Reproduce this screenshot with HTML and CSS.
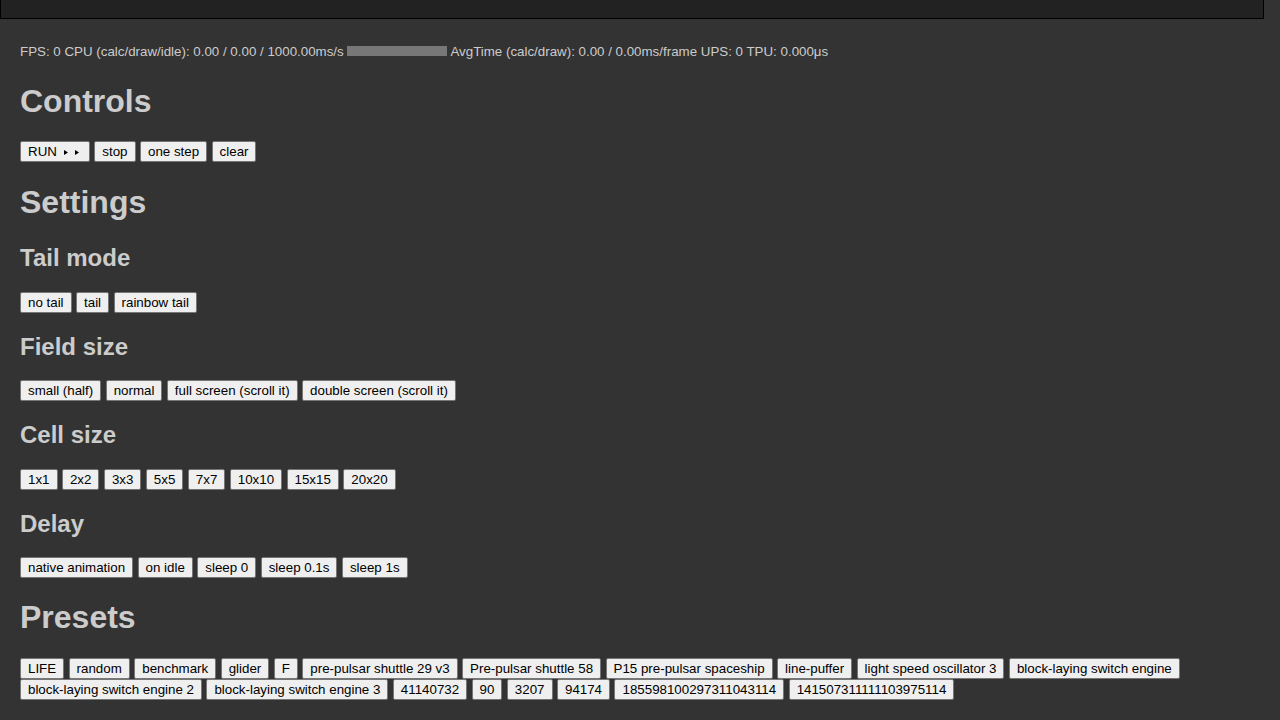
FILE: index.html
```html
<!DOCTYPE html>
<html lang="en">
<head>
<meta charset="utf-8">
<title>Life</title>
<link rel="stylesheet" href="styles.css">
</head>
<body>
<div class="field"></div>
<main class="panel">
  <div class="stats">FPS: 0 CPU (calc/draw/idle): 0.00 / 0.00 / 1000.00ms/s <span class="meter"></span> AvgTime (calc/draw): 0.00 / 0.00ms/frame UPS: 0 TPU: 0.000μs</div>

  <h1>Controls</h1>
  <div class="buttons">
    <button>RUN<span class="tris"><svg class="tri" width="4" height="5" viewBox="0 0 4 5"><path d="M0 0L4 2.5L0 5Z"/></svg><svg class="tri" width="4" height="5" viewBox="0 0 4 5"><path d="M0 0L4 2.5L0 5Z"/></svg></span></button>
    <button>stop</button>
    <button>one step</button>
    <button>clear</button>
  </div>

  <h1 class="settings-title">Settings</h1>
  <h2>Tail mode</h2>
  <div class="buttons">
    <button>no tail</button>
    <button>tail</button>
    <button>rainbow tail</button>
  </div>

  <h2>Field size</h2>
  <div class="buttons">
    <button>small (half)</button>
    <button>normal</button>
    <button>full screen (scroll it)</button>
    <button>double screen (scroll it)</button>
  </div>

  <h2>Cell size</h2>
  <div class="buttons">
    <button>1x1</button>
    <button>2x2</button>
    <button>3x3</button>
    <button>5x5</button>
    <button>7x7</button>
    <button>10x10</button>
    <button>15x15</button>
    <button>20x20</button>
  </div>

  <h2>Delay</h2>
  <div class="buttons">
    <button>native animation</button>
    <button>on idle</button>
    <button>sleep 0</button>
    <button>sleep 0.1s</button>
    <button>sleep 1s</button>
  </div>

  <h1>Presets</h1>
  <div class="buttons">
    <button>LIFE</button>
    <button>random</button>
    <button>benchmark</button>
    <button>glider</button>
    <button>F</button>
    <button>pre-pulsar shuttle 29 v3</button>
    <button>Pre-pulsar shuttle 58</button>
    <button>P15 pre-pulsar spaceship</button>
    <button>line-puffer</button>
    <button>light speed oscillator 3</button>
    <button>block-laying switch engine</button>
    <button>block-laying switch engine 2</button>
    <button>block-laying switch engine 3</button>
    <button>41140732</button>
    <button>90</button>
    <button>3207</button>
    <button>94174</button>
    <button>185598100297311043114</button>
    <button>141507311111103975114</button>
  </div>
</main>
</body>
</html>
```

FILE: styles.css
```css
html, body {
  margin: 0;
  padding: 0;
  background: #333333;
}

body {
  font-family: "Liberation Sans", Arial, sans-serif;
  font-size: 16px;
  color: #cccccc;
  overflow: hidden;
}

.field {
  width: 1262px;
  height: 18px;
  background: #222222;
  border: 1px solid #000000;
  border-top: none;
}

.panel {
  padding: 0 20px;
}

.stats {
  margin-top: 24px;
  font-size: 13.333px;
  line-height: 18.4px;
  white-space: nowrap;
}

.meter {
  display: inline-block;
  width: 100px;
  height: 10px;
  background: #777777;
  vertical-align: baseline;
}

h1 {
  font-size: 32px;
  font-weight: bold;
  line-height: 36.8px;
  margin: 21.44px 0;
}

h1.settings-title {
  margin-bottom: 24px;
}

h2 {
  font-size: 24px;
  font-weight: bold;
  line-height: 27.6px;
  margin: 19.92px 0;
}

.buttons {
  font-size: 16px;
  line-height: 21px;
}

button {
  display: inline-block;
  box-sizing: border-box;
  height: 21px;
  font-family: "Liberation Sans", Arial, sans-serif;
  font-size: 13.333px;
  line-height: 15px;
  color: #000000;
  background: #efefef;
  border: 1px solid #767676;
  border-radius: 2px;
  padding: 2px 7px;
  margin: 0;
  vertical-align: top;
}

.tris {
  display: inline-block;
  margin-left: 7px;
  margin-right: 3px;
}

.tri {
  display: inline-block;
  fill: #000000;
  vertical-align: 1px;
}

.tri + .tri {
  margin-left: 7px;
}
```
